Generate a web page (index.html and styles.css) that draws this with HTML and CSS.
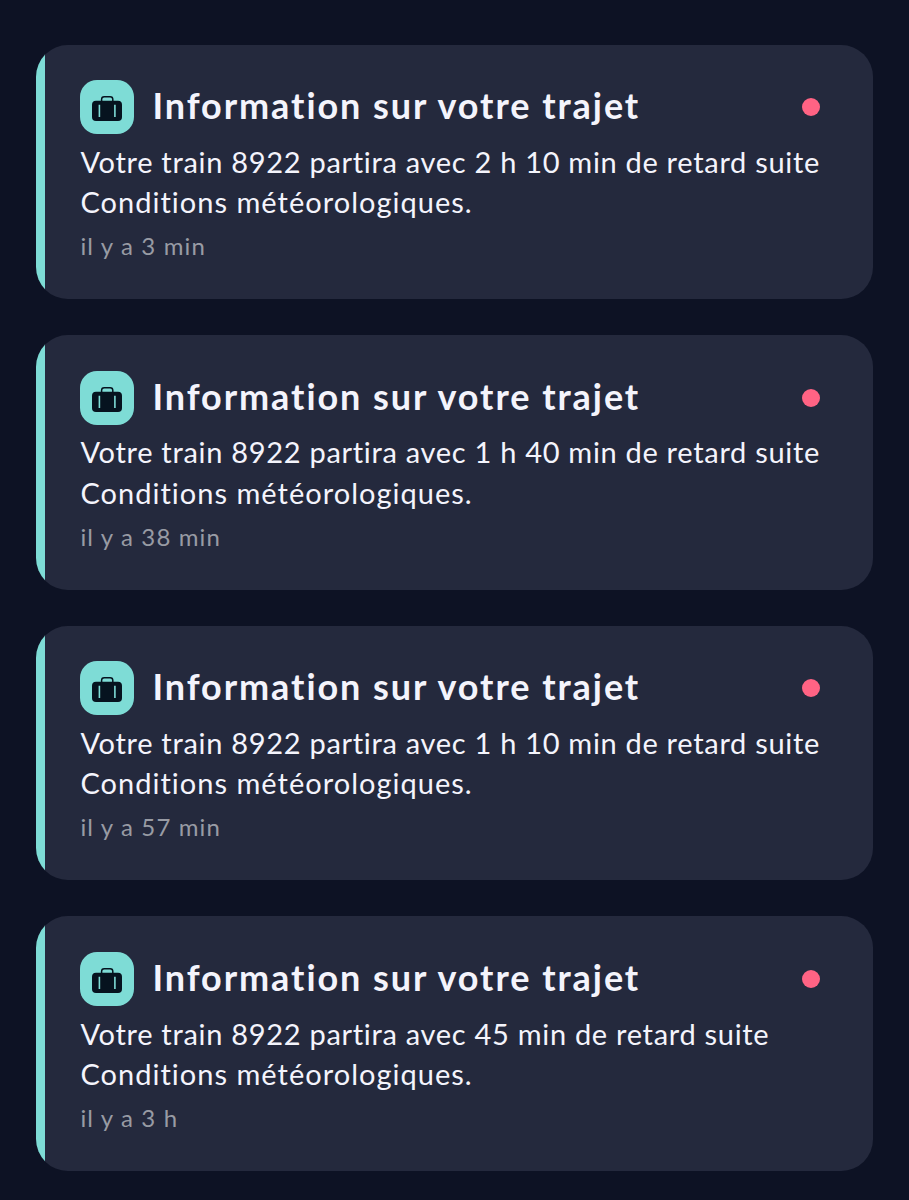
FILE: index.html
```html
<!DOCTYPE html>
<html lang="fr">
<head>
<meta charset="utf-8">
<title>Notifications</title>
<link rel="stylesheet" href="styles.css">
</head>
<body>
<svg class="sprite" aria-hidden="true">
  <symbol id="suitcase" viewBox="0 0 54 54">
    <path class="handle" d="M21.6 21.5v-2.2q0-2.6 2.6-2.6h6q2.6 0 2.6 2.6v2.2"/>
    <rect class="case" x="12" y="20.7" width="30" height="20.4" rx="4"/>
    <path class="strap" d="M19.4 24.8v12.2M34.9 24.8v12.2"/>
  </symbol>
</svg>
<main class="list">
  <article class="card">
    <header class="head"><svg class="icon"><use href="#suitcase"/></svg><h2 class="title">Information sur votre trajet</h2><i class="dot"></i></header>
    <p class="body"><span class="delay">Votre train 8922 partira avec 2 h 10 min de retard suite</span><br>Conditions météorologiques.</p>
    <p class="time">il y a 3 min</p>
  </article>
  <article class="card">
    <header class="head"><svg class="icon"><use href="#suitcase"/></svg><h2 class="title">Information sur votre trajet</h2><i class="dot"></i></header>
    <p class="body"><span class="delay">Votre train 8922 partira avec 1 h 40 min de retard suite</span><br>Conditions météorologiques.</p>
    <p class="time">il y a 38 min</p>
  </article>
  <article class="card">
    <header class="head"><svg class="icon"><use href="#suitcase"/></svg><h2 class="title">Information sur votre trajet</h2><i class="dot"></i></header>
    <p class="body"><span class="delay">Votre train 8922 partira avec 1 h 10 min de retard suite</span><br>Conditions météorologiques.</p>
    <p class="time">il y a 57 min</p>
  </article>
  <article class="card">
    <header class="head"><svg class="icon"><use href="#suitcase"/></svg><h2 class="title">Information sur votre trajet</h2><i class="dot"></i></header>
    <p class="body"><span class="delay">Votre train 8922 partira avec 45 min de retard suite</span><br>Conditions météorologiques.</p>
    <p class="time">il y a 3 h</p>
  </article>
</main>
</body>
</html>
```
FILE: styles.css
```css
* { box-sizing: border-box; }
body {
  margin: 0;
  height: 1200px;
  overflow: hidden;
  background: #0d1224;
  color: #f4f4fc;
  font-family: Lato, "Open Sans", sans-serif;
}
.sprite { display: none; }
.list {
  display: flex;
  flex-direction: column;
  gap: 36px;
  padding: 44.5px 36px 0;
}
.card {
  height: 254.6px;
  padding: 35.8px 53.5px 0 44.4px;
  border-radius: 32px;
  background: linear-gradient(to right, #7edcd6 9px, #24293d 9px);
}
.head { display: flex; align-items: center; height: 54px; }
.icon {
  flex: none;
  width: 54px;
  height: 54px;
  border-radius: 17px;
  background: #7edcd6;
}
.handle { fill: none; stroke: #06131f; stroke-width: 1.5; }
.case { fill: #06131f; }
.strap { fill: none; stroke: #7edcd6; stroke-width: 1.6; }
.title {
  flex: 1;
  margin: 0 0 0 18px;
  padding-bottom: 3px;
  font-size: 36px;
  font-weight: 700;
  line-height: 51px;
  letter-spacing: 1.94px;
  white-space: nowrap;
}
.dot {
  width: 18px;
  height: 18px;
  border-radius: 50%;
  background: #ff6384;
}
.body {
  margin: 7.6px 0 0;
  font-size: 29px;
  line-height: 40.3px;
  letter-spacing: 1.02px;
  white-space: nowrap;
}
.delay { letter-spacing: 0.7px; }
.time {
  margin: 5.5px 0 0;
  color: #989ba4;
  font-size: 24px;
  line-height: 36px;
  letter-spacing: 1.14px;
}
```
